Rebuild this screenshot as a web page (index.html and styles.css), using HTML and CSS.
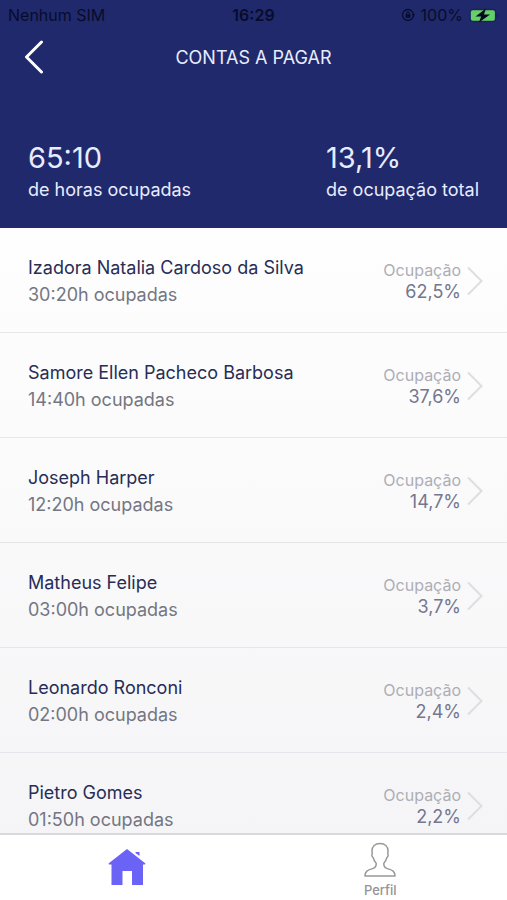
FILE: index.html
```html
<!DOCTYPE html>
<html lang="pt-BR">
<head>
<meta charset="utf-8">
<meta name="viewport" content="width=device-width, initial-scale=1">
<title>Contas a pagar</title>
<link rel="stylesheet" href="styles.css">
</head>
<body>
<svg class="sprite" aria-hidden="true">
  <symbol id="chevron" viewBox="0 0 16 30"><path d="M1 1.500 14.500 15 1 28.500" fill="none" stroke="currentColor" stroke-width="2"/></symbol>
</svg>
<header class="header">
  <div class="status">
    <span>Nenhum SIM</span>
    <span class="clock">16:29</span>
    <span class="power">
      <svg class="lock" viewBox="0 0 14 14" aria-hidden="true"><circle cx="7" cy="7" r="5.500" fill="none" stroke="currentColor" stroke-width="1.300"/><path d="M10.800 6h3.200l-1.600 2.600z" fill="currentColor"/><rect x="4.600" y="6.300" width="4.800" height="3.500" rx=".6" fill="currentColor"/><path d="M5.600 6.500V5.200a1.400 1.400 0 0 1 2.800 0v1.300" fill="none" stroke="currentColor"/></svg>
      <span>100%</span>
      <svg class="battery" viewBox="0 0 32 16" aria-hidden="true"><rect x=".8" y="1.300" width="28" height="13.400" rx="3.500" fill="none" stroke="#1b2254"/><rect x="2" y="2.500" width="25.600" height="11" rx="2" fill="#65cf68"/><path d="M30 6v4q1.500-.6 1.500-2t-1.500-2z" fill="#1b2254"/><path d="M18 .5 7 9h6L10.500 15.500 22.500 7h-6.500z" fill="#05081f"/></svg>
    </span>
  </div>
  <div class="titlebar">
    <button class="back" type="button" aria-label="Voltar"><svg viewBox="0 0 20 34" aria-hidden="true"><path d="M17.500 2 2.500 17l15 15" fill="none" stroke="#fff" stroke-width="3" stroke-linecap="round" stroke-linejoin="round"/></svg></button>
    <h1>CONTAS A PAGAR</h1>
  </div>
  <div class="summary">
    <div><strong>65:10</strong><span>de horas ocupadas</span></div>
    <div><strong>13,1%</strong><span>de ocupação total</span></div>
  </div>
</header>
<main class="people">
  <a class="person" href="#izadora"><span class="info"><span class="name">Izadora Natalia Cardoso da Silva</span><span class="hours">30:20h ocupadas</span></span><span class="rate"><span class="label">Ocupação</span><span class="value">62,5%</span></span><svg class="chevron" aria-hidden="true"><use href="#chevron"/></svg></a>
  <a class="person" href="#samore"><span class="info"><span class="name">Samore Ellen Pacheco Barbosa</span><span class="hours">14:40h ocupadas</span></span><span class="rate"><span class="label">Ocupação</span><span class="value">37,6%</span></span><svg class="chevron" aria-hidden="true"><use href="#chevron"/></svg></a>
  <a class="person" href="#joseph"><span class="info"><span class="name">Joseph Harper</span><span class="hours">12:20h ocupadas</span></span><span class="rate"><span class="label">Ocupação</span><span class="value">14,7%</span></span><svg class="chevron" aria-hidden="true"><use href="#chevron"/></svg></a>
  <a class="person" href="#matheus"><span class="info"><span class="name">Matheus Felipe</span><span class="hours">03:00h ocupadas</span></span><span class="rate"><span class="label">Ocupação</span><span class="value">3,7%</span></span><svg class="chevron" aria-hidden="true"><use href="#chevron"/></svg></a>
  <a class="person" href="#leonardo"><span class="info"><span class="name">Leonardo Ronconi</span><span class="hours">02:00h ocupadas</span></span><span class="rate"><span class="label">Ocupação</span><span class="value">2,4%</span></span><svg class="chevron" aria-hidden="true"><use href="#chevron"/></svg></a>
  <a class="person" href="#pietro"><span class="info"><span class="name">Pietro Gomes</span><span class="hours">01:50h ocupadas</span></span><span class="rate"><span class="label">Ocupação</span><span class="value">2,2%</span></span><svg class="chevron" aria-hidden="true"><use href="#chevron"/></svg></a>
</main>
<nav class="tabs">
  <a class="tab tab-home" href="#home" aria-label="Início"><svg viewBox="0 0 38 38" aria-hidden="true"><path d="M19 1 37.500 15.500 37 16.500H35V37H24V23H14.500V37H3.500V16.500H1L.5 15.500z" fill="#6a63f6"/><path d="M27.500 4H31.500V8L27.500 5z" fill="#6a63f6"/></svg></a>
  <a class="tab" href="#perfil"><svg viewBox="0 0 34 36" aria-hidden="true"><path d="M17 1.500c-5 0-8 3-8 7.500 0 1 .3 2 .2 3-.8.900-.2 3 1 3.700.5 2.500 1.500 4 3 5.500.2 3-.7 4.300-3 5.200C5.500 28 2 28.500 2 34h30c0-5.500-3.500-6-8.200-7.600-2.300-.9-3.200-2.200-3-5.200 1.500-1.500 2.500-3 3-5.500 1.200-.7 1.800-2.800 1-3.700-.1-1 .2-2 .2-3 0-4.500-3-7.500-8-7.500z" fill="none" stroke="#999" stroke-width="1.500" stroke-linejoin="round"/></svg><span>Perfil</span></a>
</nav>
</body>
</html>
```
FILE: styles.css
```css
* { box-sizing: border-box; }
body {
  margin: 0;
  height: 100vh;
  display: flex;
  flex-direction: column;
  font-family: Inter, "Liberation Sans", sans-serif;
  background: #fff;
}
.sprite { position: absolute; width: 0; height: 0; }
.header {
  flex: none;
  padding-bottom: 24px;
  background: #20296b;
  color: #e8ecff;
}
.status {
  display: grid;
  grid-template-columns: 1fr auto 1fr;
  align-items: center;
  height: 30px;
  padding: 0 8px;
  font-size: 16px;
  color: #080c2c;
}
.clock { font-weight: 600; }
.power { display: flex; align-items: center; justify-content: flex-end; gap: 6px; }
.lock { width: 14px; height: 14px; }
.battery { width: 30px; height: 15px; }
.titlebar {
  display: grid;
  grid-template-columns: 48px 1fr 48px;
  align-items: center;
  height: 54px;
}
.back {
  display: flex;
  justify-content: flex-end;
  padding: 0 4px;
  border: 0;
  background: none;
}
.back svg { width: 20px; height: 34px; }
h1 { margin: 0; text-align: center; font-size: 18px; font-weight: 400; }
.summary {
  display: flex;
  justify-content: space-between;
  padding: 56px 28px 0;
}
.summary strong, .summary span { display: block; }
.summary strong { font-size: 29px; line-height: 36px; font-weight: 400; }
.summary span { font-size: 18px; line-height: 28px; }
.people {
  flex: 1;
  min-height: 0;
  overflow: hidden;
  background: linear-gradient(#fefefe, #f5f5f7);
}
.person {
  display: flex;
  align-items: center;
  height: 105px;
  padding: 1px 24px 0 28px;
  border-bottom: 1px solid #e7e7ea;
  color: #272d56;
  text-decoration: none;
}
.info { flex: 1; }
.name, .hours { display: block; font-size: 18px; line-height: 27px; }
.hours { color: #747682; }
.rate { text-align: right; }
.label, .value { display: block; line-height: 22px; }
.label { font-size: 16px; color: #adaeb6; }
.value { font-size: 18px; color: #74778f; }
.chevron { width: 16px; height: 30px; margin-left: 6px; color: #dddee2; }
.tabs {
  flex: none;
  display: flex;
  height: 67px;
  border-top: 2px solid #d9d9db;
  background: #fff;
}
.tab {
  flex: 1;
  display: flex;
  flex-direction: column;
  align-items: center;
  padding-top: 7px;
  color: #939398;
  font-size: 13px;
  line-height: 16px;
  font-weight: 500;
  text-decoration: none;
}
.tab svg { width: 34px; height: 36px; margin-bottom: 4px; }
.tab-home { padding-top: 13px; }
.tab-home svg { width: 38px; height: 38px; }
```
